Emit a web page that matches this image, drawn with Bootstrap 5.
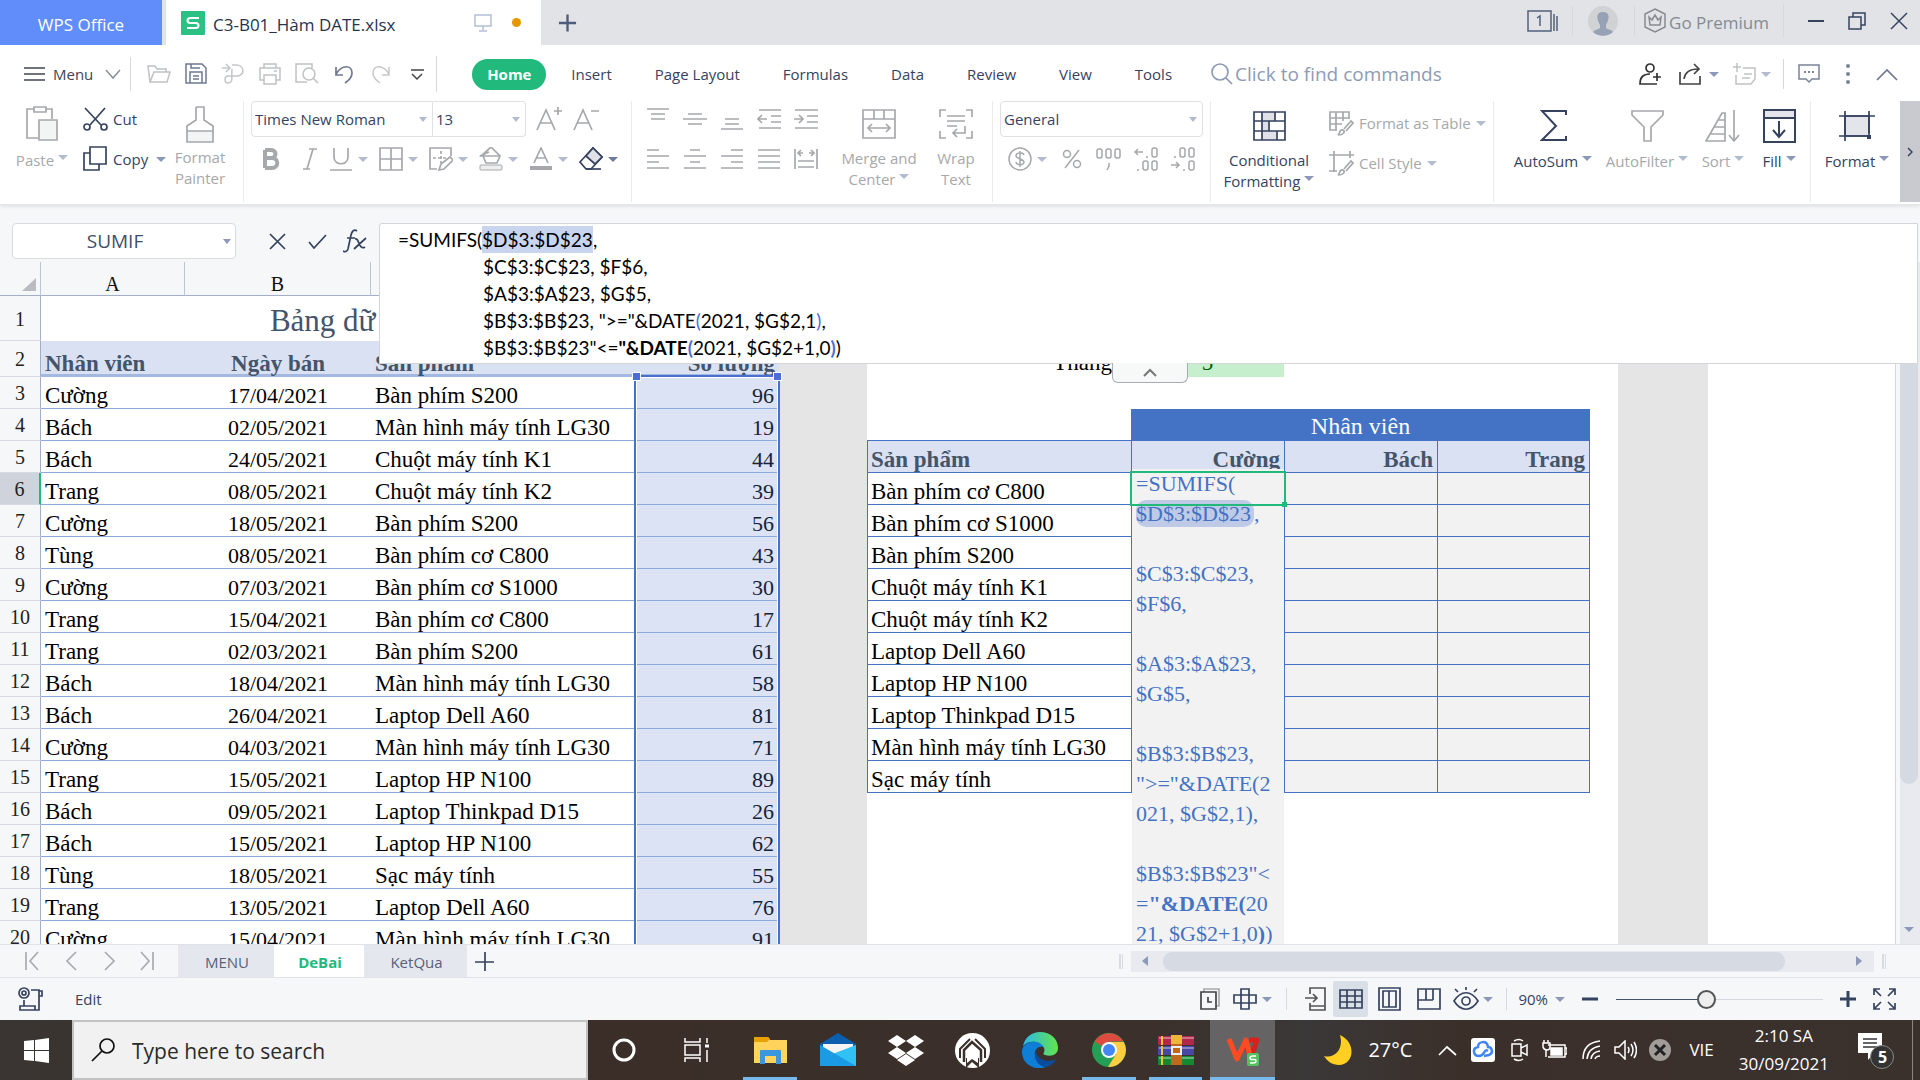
<!DOCTYPE html>
<html lang="vi">
<head>
<meta charset="utf-8">
<meta name="viewport" content="width=device-width, initial-scale=1">
<title>C3-B01_Hàm DATE.xlsx - WPS Office</title>
<link href="https://cdn.jsdelivr.net/npm/bootstrap@5.3.0/dist/css/bootstrap.min.css" rel="stylesheet">
<style>
:root{--ink:#36435f;--dim:#a6a8ac;--soft:#f5f7f9;--green:#21b97c;--blue:#4472c4}
html,body{height:100%}
body{font:15px/21px "Open Sans","Noto Sans",sans-serif;color:var(--ink);background:#fff;overflow:hidden}
button{background:none;border:0;padding:0;color:inherit;display:inline-flex;align-items:center;justify-content:center;white-space:nowrap}
a{color:inherit;text-decoration:none}
svg{flex:none;display:block}
svg:not([fill]){fill:none}
svg:not([stroke]){stroke:currentColor}
svg:not([stroke-width]){stroke-width:2}
.off{color:var(--dim)}
.dd{width:0;height:0;border:5px solid transparent;border-top-color:#8b98b8;border-bottom:0;flex:none}
.off .dd{border-top-color:#b3bccf}
.vr-line{width:1px;background:#d5d8dd;flex:none}
/* title bar */
.titlebar{height:45px;background:#e1e3e7;font-size:17px}
.brand-tab{width:162px;background:#618dfb;color:#fff;margin-right:4px}
.file-tab{width:375px;background:#fff;color:#27334d;padding-left:15px}
.dot{width:9px;height:9px;border-radius:50%;background:#e59700}
/* menu */
.menubar{height:55px;padding-top:3px}
.q{width:37px;height:32px}
.home{background:var(--green);color:#fff;font-weight:700;border-radius:16px;width:74px;height:31px;margin-right:-18px}
.tabs-nav{gap:43px;margin-left:35px}
.finder{border:0;outline:0;font-size:19px;width:240px;color:#8e9bb5;background:none;padding:0 0 0 2px}
.finder::placeholder{color:#8e9bb5;opacity:1}
/* ribbon */
.ribbon{height:105px;padding-top:1px;border-bottom:1px solid #e4e6e9;box-shadow:0 2px 3px #00000014;position:relative;z-index:2}
.sep{width:1px;height:101px;background:#e9ebee;flex:none}
.trow{height:36px;display:flex;align-items:center}
.rows{display:flex;flex-direction:column;gap:4px}
.big{flex-direction:column;justify-content:flex-start;align-items:center;padding-top:5px;text-align:center}
.big .lbl{display:flex;align-items:flex-start;gap:4px}
.big .lbl .dd{margin-top:5px}
.big svg{margin-bottom:9px}
.tool{width:37px;height:32px}
.tooldd{width:50px;justify-content:flex-start;gap:5px;height:32px}
.w38{width:38px}.w40{width:40px}.w44{width:44px}.w52{width:52px}.w62{width:62px}.w74{width:74px}.w84{width:84px}.w90{width:90px}.w98{width:98px}
.pick{font-size:15px;height:36px;border:1px solid #dfe1e5;border-radius:4px;color:var(--ink);padding:1px 20px 0 3px;appearance:none;background:#fff url("data:image/svg+xml,%3Csvg xmlns='http://www.w3.org/2000/svg' width='10' height='5'%3E%3Cpath d='M1 0h8L5 5z' fill='%23b3bccf'/%3E%3C/svg%3E") no-repeat right 4px center}
.pick-font{width:182px;border-radius:4px 0 0 4px}
.pick-size{width:93px;border-left:0;border-radius:0 4px 4px 0}
.pick-num{width:203px}
.more{width:20px;background:#c8cad0;height:101px;margin-left:auto}
/* formula bar */
.fbar{height:57px;background:var(--soft);position:relative;z-index:1}
.namebox{width:224px;height:36px;margin:18px 0 0 12px;border:1px solid #d8dbe0;border-radius:4px;text-align:center;font-size:19px;color:#3f4d6b;padding-right:20px;background:#fff url("data:image/svg+xml,%3Csvg xmlns='http://www.w3.org/2000/svg' width='10' height='5'%3E%3Cpath d='M1 0h8L5 5z' fill='%238b98b8'/%3E%3C/svg%3E") no-repeat right 3px center}
.fbtns{padding:24px 0 0 33px;gap:22px}
.fedit{position:absolute;left:379px;right:2px;top:18px;height:141px;z-index:6;background:#fff;border:1px solid #d3d5da;border-radius:3px 0 0 0;padding:2px 0 0 18px;font:19px/27px Lato,sans-serif;color:#000;outline:0}
.fedit div+div{padding-left:85px}
.fedit .sel{background:#c9d4ef;padding:2px 0}
.paren{color:#4a6fd0}
.collapse-tab{position:absolute;left:1112px;top:158px;width:76px;height:20px;z-index:6;background:#f7f8f8;border:1px solid #a9acb1;border-top:0;border-radius:0 0 6px 6px}
/* sheet */
.sheet{position:relative;overflow:hidden;min-height:0;border-right:1px solid #d5d8dd;background:#fff}
.grid{table-layout:fixed;width:100%;border-collapse:separate;border-spacing:0;font-family:"Liberation Serif",serif;color:#000}
.grid td,.grid th{padding:0 4px;white-space:nowrap;vertical-align:bottom;font-size:23px;line-height:24px;height:32px;font-weight:400}
.grid thead th{height:34px;background:var(--soft);border-bottom:1px solid #a3afc6;border-right:1px solid #bcc5d6;font-size:20px;line-height:22px;text-align:center;color:#111;vertical-align:bottom}
.grid tbody th{background:var(--soft);border-right:1px solid #a3afc6;border-bottom:1px solid #d5dae4;text-align:center;font-size:20px;line-height:30px;vertical-align:middle;color:#222;padding-top:1px}
.grid .now th{background:#cfd3db;border-right:2px solid var(--green)}
.grid .r1 td,.grid .r1 th{height:45px}
.grid .r1 .ttl{font-size:31px;line-height:36px;text-align:center;color:#44546a;padding-bottom:2px}
.grid .r2 td,.grid .r2 th{height:36px}
.grid .r2 td{padding-bottom:2px}
.grid .r2 .hd{background:#d9e1f2;color:#44546a;font-weight:700;border-bottom:3px solid #a2b8e1;line-height:20px;padding-bottom:0}
.grid .ln{border-bottom:1px solid #8ea9db}
.grid .dt{text-align:center;font-size:22px}
.grid .num{text-align:right;font-size:22px;background:#dce3f5;padding-right:5px;position:relative;color:#152238}
.grid .e{text-align:right}
.grid .gray{background:#e5e5e5}
.grid .inp{background:#c6efce;color:#006100;text-align:center}
.grid .lab{text-align:right;padding-right:19px}
.grid .f{border-left:1px solid var(--blue);border-bottom:1px solid var(--blue);padding-left:3px}
.grid .v{border-left:1px solid var(--blue);border-bottom:1px solid var(--blue);background:#f2f2f2}
.grid .vr-end{border-right:1px solid var(--blue)}
.grid .top{border-bottom:1px solid var(--blue)}
.grid .band{background:var(--blue);color:#fff;text-align:center;font-size:24px;line-height:30px}
.grid .sub{background:#d9e1f2;color:#44546a;font-weight:700}
.grid td.act{position:relative;overflow:visible}
.celled{position:absolute;left:0;top:-4px;width:152px;height:500px;background:#f2f2f2;color:var(--blue);font-size:22px;line-height:30px;padding-left:4px;text-align:left;z-index:2;outline:0}
.celled .pill{background:#bfcae7;border-radius:10px;padding:1px 3px 1px 0}
.frame{position:absolute;left:-2px;top:-2px;width:156px;height:35px;border:2px solid var(--green);z-index:3}
.frame::after{content:"";position:absolute;right:-3px;bottom:-3px;width:5px;height:5px;background:var(--green)}
.range{position:absolute;left:-1px;right:-1px;top:-2px;height:640px;border:2px solid #4a6fd0;z-index:2;box-shadow:inset 0 0 0 1px #fff}
.range::before,.range::after{content:"";position:absolute;top:-4px;width:7px;height:7px;background:#4a6fd0;outline:1px solid #fff}
.range::before{left:-3px}.range::after{right:-3px}
.vscroll{width:20px;margin-left:4px;background:#e8eaf0;position:relative;flex:none}
.vthumb{background:#d5d9e2;border-radius:9px;width:18px;height:522px}
.vdown{position:absolute;left:4px;bottom:12px}
/* sheet tabs and status */
.sheetbar{height:34px;background:var(--soft);border-top:1px solid #dfe2e7;border-bottom:1px solid #dfe2e7}
.snav{padding-left:25px;gap:23px;color:#a9abb0;width:178px}
.stab{height:32px;background:#e5e7ee;color:#56617d;padding:3px 0 0 2px}
.stab.cur{background:#fff;color:var(--green);font-weight:700}
.hs{height:21px;width:743px;background:#e8eaf0}
.hthumb{height:19px;width:622px;border-radius:9px;background:#d6dae3}
.statusbar{height:42px;background:var(--soft)}
.zoom{appearance:none;width:207px;height:20px;background:linear-gradient(90deg,#44526f 0 90px,#d5d8de 90px) center/100% 1px no-repeat;margin:0}
.zoom::-webkit-slider-thumb{appearance:none;width:19px;height:19px;border-radius:50%;background:#eee;border:2px solid #555}
/* taskbar */
.taskbar{height:60px;background:linear-gradient(90deg,#3a3532,#3b2e29 25%,#3b302b 60%,#3a3838 68%,#3b2f2a 76%,#3a312d);color:#fff}
.tsearch{width:516px;height:60px;background:#f1f1f1;border:2px solid #c2c2c2;color:#222;padding-left:17px}
.tsearch input{border:0;background:none;outline:0;font-size:21px;color:#2b2b2b;width:400px;padding:2px 0 0 17px}
.tsearch input::placeholder{color:#2b2b2b;opacity:1}
.app{height:60px;position:relative}
.app.run::after{content:"";position:absolute;left:0;right:0;bottom:0;height:3px;background:#76b9ed}
.app.front{background:#656363}
.tray{font-size:17px;line-height:28px}
.degrees{font-size:20px}
</style>
<script src="https://cdn.jsdelivr.net/npm/bootstrap@5.3.0/dist/js/bootstrap.bundle.min.js"></script>
</head>
<body class="d-flex flex-column vh-100">

<header class="titlebar d-flex align-items-stretch flex-shrink-0">
  <button class="brand-tab pt-1">WPS Office</button>
  <div class="file-tab d-flex align-items-center">
    <svg width="24" height="24" viewBox="0 0 24 24" stroke="none"><rect width="24" height="24" rx="1" fill="#2cc184"/><path d="M18 7H9.500Q6.500 7 6.500 9.500T9.500 12h5q3 0 3 2.500T14.500 17H6" stroke="#fff" stroke-width="2"/></svg>
    <span class="ms-2 pt-1">C3-B01_Hàm DATE.xlsx</span>
    <svg class="ms-auto" width="18" height="18" viewBox="0 0 18 18" stroke="#b4bfd6" stroke-width="1.500"><path d="M1 1h16v11H1zM9 12v4M5 17h8"/></svg>
    <span class="dot" style="margin:0 20px"></span>
  </div>
  <button style="margin-left:17px" aria-label="New tab"><svg width="19" height="18" viewBox="0 0 20 18" stroke="#4f5d7c" stroke-width="2.500"><path d="M1 9h18M10 0v18"/></svg></button>
  <div class="d-flex align-items-center ms-auto pb-1">
    <button aria-label="Windows"><svg width="32" height="22" viewBox="0 0 32 22" stroke="#53617f" stroke-width="1.500"><path d="M1 1h23v20H1zM27 4v17M30 6v15M10 8l3-2v10"/></svg></button>
    <span class="vr-line" style="height:30px;margin:0 15px 0 13px"></span>
    <svg width="30" height="30" viewBox="0 0 30 30" stroke="none"><circle cx="15" cy="15" r="15" fill="#d1d2d3"/><path d="M15 6c8 0 6 8 3 13v3c3 2 6 2 7 4a15 15 0 0 1-20 0c1-2 4-2 7-4v-3C9 14 7 6 15 6z" fill="#96a2b5"/></svg>
    <span class="vr-line ms-3" style="height:30px"></span>
    <button style="color:#868a91;margin-left:9px"><svg width="22" height="25" viewBox="0 0 22 25" stroke-width="1.500"><path d="M11 1l10 5v13l-10 5-10-5V6zM6 17L5 9l3 3 3-5 3 5 3-3-1 8z"/></svg><span class="pt-1" style="margin-left:3px">Go Premium</span></button>
    <span class="vr-line" style="height:33px;margin-left:14px"></span>
    <button class="ms-4" aria-label="Minimize"><svg width="16" height="18" viewBox="0 0 16 18"><path d="M0 9h16"/></svg></button>
    <button class="ms-4" aria-label="Restore"><svg width="18" height="18" viewBox="0 0 18 18" stroke-width="1.500"><path d="M1 5h12v12H1zM5 5V1h12v12h-4"/></svg></button>
    <button class="ms-4 me-2 pe-1" aria-label="Close"><svg width="18" height="18" viewBox="0 0 18 18" stroke-width="1.500"><path d="M1 1l16 16M17 1L1 17"/></svg></button>
  </div>
</header>

<nav class="menubar d-flex align-items-center flex-shrink-0">
  <button class="ms-4" style="color:#3f4654"><svg width="21" height="16" viewBox="0 0 21 16" stroke-width="1.500"><path d="M0 2h21M0 8h21M0 14h21"/></svg><span class="ms-2">Menu</span><svg style="margin-left:9px" width="20" height="12" viewBox="0 0 20 12" stroke="#8b909b" stroke-width="1.500"><path d="M4 2l7 8 7-8"/></svg></button>
  <span class="vr-line ms-2" style="height:34px"></span>
  <div class="d-flex off" style="margin-left:9px">
    <button class="q" aria-label="Open"><svg width="24" height="20" viewBox="0 0 24 20" stroke-width="1.500" stroke="#bfc1c4"><path d="M3 18L1 2h7l2 3h9v3M3 18L7 8h16l-3 10z"/></svg></button>
    <button class="q" aria-label="Save"><svg width="22" height="22" viewBox="0 0 22 22" stroke-width="1.500" stroke="#6f7890"><path d="M1 1h16l4 4v15H1zM5 20V9h12v11M6 1v4h9M8 13h6M8 16h6"/></svg></button>
    <button class="q" aria-label="Export"><svg width="22" height="22" viewBox="0 0 22 22" stroke-width="1.500" stroke="#c3c5c8"><path d="M0 5h7M4 1l4 4-4 4M10 2h4c9 0 9 11 1 11H6c-4 0-4 7 0 7 6 0 3-6 4-14"/></svg></button>
    <button class="q" aria-label="Print"><svg width="22" height="22" viewBox="0 0 22 22" stroke-width="1.500" stroke="#bfc1c4"><path d="M5 5V1h12v4M5 17H1V5h20v12h-4M5 12h12v9H5zM15 8h3"/></svg></button>
    <button class="q" aria-label="Preview"><svg width="24" height="22" viewBox="0 0 24 22" stroke-width="1.500" stroke="#bfc1c4"><path d="M12 19H1V1h16v4"/><circle cx="14" cy="11" r="6"/><path d="M18 15l5 5"/></svg></button>
    <button class="q" aria-label="Undo"><svg width="20" height="20" viewBox="0 0 20 20" stroke-width="1.700" stroke="#6f7890"><path d="M2 3v8h7M2 10C8 0 18 1 18 9c0 5-4 8-7 10"/></svg></button>
    <button class="q" aria-label="Redo"><svg width="20" height="20" viewBox="0 0 20 20" stroke-width="1.500" stroke="#c6c8cb"><path d="M18 3v8h-7M18 10C12 0 2 1 2 9c0 5 4 8 7 10"/></svg></button>
    <button class="q" aria-label="Customize"><svg width="13" height="13" viewBox="0 0 13 13" stroke="#444" stroke-width="1.500"><path d="M0 2h13M1 6l5 5 5-5"/></svg></button>
  </div>
  <span class="vr-line" style="height:36px"></span>
  <div class="tabs-nav d-flex align-items-center">
    <a href="#" class="home d-flex align-items-center justify-content-center">Home</a>
    <a href="#">Insert</a><a href="#">Page Layout</a><a href="#">Formulas</a><a href="#">Data</a><a href="#">Review</a><a href="#">View</a><a href="#">Tools</a>
    <label class="d-flex align-items-center" style="margin-left:-4px"><svg width="22" height="22" viewBox="0 0 22 22" stroke="#8e9bb5" stroke-width="1.700"><circle cx="9" cy="9" r="8"/><path d="M15 15l6 6"/></svg><input class="finder" placeholder="Click to find commands" aria-label="Find commands"></label>
  </div>
  <div class="d-flex align-items-center ms-auto" style="padding-right:22px">
    <button aria-label="Account"><svg width="22" height="22" viewBox="0 0 22 22" stroke="#333" stroke-width="1.700"><circle cx="11" cy="5" r="4"/><path d="M13 21H1c0-7 3-10 10-10M18 10v8M14 14h8M13 21h5"/></svg></button>
    <button style="margin-left:18px" aria-label="Share"><svg width="25" height="22" viewBox="0 0 25 22" stroke="#444" stroke-width="1.700"><path d="M1 9v12h20v-8M5 16C6 9 11 6 19 6M15 1l5 5-5 5"/></svg><i class="dd" style="margin-left:5px"></i></button>
    <button class="off" style="margin-left:14px" aria-label="Notes"><svg width="23" height="22" viewBox="0 0 23 22" stroke="#c0c2c5" stroke-width="1.500"><path d="M4 0v9M0 4h8M10 5h12v11l-4 5H3v-9M11 11h8M9 15h8"/></svg><i class="dd" style="margin-left:5px"></i></button>
    <span class="vr-line" style="height:30px;margin:0 14px 0 12px"></span>
    <button aria-label="Comments"><svg width="22" height="20" viewBox="0 0 22 20" stroke="#7a8499" stroke-width="1.500"><path d="M1 1h20v14h-7l-3 3-3-3H1z"/><path d="M6 8h2M10 8h2M14 8h2" stroke-width="2"/></svg></button>
    <button class="ms-4" aria-label="More"><svg width="8" height="22" viewBox="0 0 8 22" stroke="none" fill="#7a8499"><circle cx="4" cy="3" r="2"/><circle cx="4" cy="11" r="2"/><circle cx="4" cy="19" r="2"/></svg></button>
    <button class="ms-4" aria-label="Collapse ribbon"><svg width="22" height="13" viewBox="0 0 22 13" stroke="#6f7890" stroke-width="1.700"><path d="M1 12L11 2l10 10"/></svg></button>
  </div>
</nav>

<section class="ribbon d-flex align-items-start flex-shrink-0">
  <button class="big off w62" style="margin-left:11px"><svg width="32" height="35" viewBox="0 0 32 35" stroke-width="1.700"><path d="M8 3H1v29h11M20 3h6v10M8 1h12v5H8z"/><path d="M13 14h18v20H13z" fill="#f3f5f5"/></svg><span class="lbl">Paste <i class="dd"></i></span></button>
  <div class="rows" style="width:86px;margin-left:10px">
    <div class="trow"><button><svg width="25" height="24" viewBox="0 0 25 24" stroke-width="1.700"><path d="M2 1l16 17M22 1L7 18"/><circle cx="4" cy="20" r="3"/><circle cx="21" cy="20" r="3"/></svg><span style="margin-left:5px">Cut</span></button></div>
    <div class="trow"><button><svg width="24" height="26" viewBox="0 0 24 26" stroke-width="1.700"><path d="M7 7H1v17h15v-6M7 1h16v17H7z"/></svg><span style="margin-left:6px">Copy</span><i class="dd ms-2"></i></button></div>
  </div>
  <button class="big off w62 ms-0"><svg class="mb-1" width="28" height="37" viewBox="0 0 28 37" stroke-width="1.700"><path d="M1 25h26v11H1z" fill="#f3f5f5"/><path d="M10 1h8v13l9 6v5M10 1v13l-9 6v5"/></svg><span>Format<br>Painter</span></button>
  <span class="sep" style="margin:0 7px 0 12px"></span>
  <div class="rows off">
    <div class="trow">
      <select class="pick pick-font" aria-label="Font"><option>Times New Roman</option></select><select class="pick pick-size" aria-label="Size"><option>13</option></select>
      <button class="tool ms-1" aria-label="Grow font"><svg width="26" height="24" viewBox="0 0 26 24" stroke-width="1.700"><path d="M1 23L10 3l9 20M4 16h12M18 4h8M22 0v8"/></svg></button>
      <button class="tool" aria-label="Shrink font"><svg width="26" height="24" viewBox="0 0 26 24" stroke-width="1.700"><path d="M1 23L10 3l9 20M4 16h12M18 4h8"/></svg></button>
    </div>
    <div class="trow">
      <button class="w40 h-100" aria-label="Bold"><svg width="18" height="22" viewBox="0 0 18 22" stroke-width="4"><path d="M3 2v18M3 2h6c6 0 6 8 0 8H3M3 10h7c7 0 7 10 0 10H3"/></svg></button>
      <button class="w38 h-100" aria-label="Italic"><svg width="14" height="22" viewBox="0 0 14 22" stroke-width="1.700"><path d="M6 1h8M0 21h7M10 1L4 21"/></svg></button>
      <button class="tooldd" aria-label="Underline"><svg width="24" height="24" viewBox="0 0 24 24" stroke-width="1.700"><path d="M5 1v9c0 9 14 9 14 0V1M1 23h22"/></svg><i class="dd"></i></button>
      <button class="tooldd" aria-label="Borders"><svg width="24" height="24" viewBox="0 0 24 24" stroke-width="1.700"><path d="M1 1h22v22H1zM12 1v22M1 12h22"/></svg><i class="dd"></i></button>
      <button class="tooldd" aria-label="Draw border"><svg width="24" height="24" viewBox="0 0 24 24" stroke-width="1.700"><path d="M8 22H1V1h21v8"/><path d="M4 11h13M12 4v12" stroke-dasharray="3 2"/><path d="M10 23l2-6 9-7 3 3-9 9z"/></svg><i class="dd"></i></button>
      <button class="tooldd" aria-label="Fill color"><svg width="24" height="24" viewBox="0 0 24 24" stroke-width="1.700"><path d="M12 0L2 9h18M12 0l9 9-3 7H7l-3-7M1 9l9-4"/><rect x="1" y="18" width="22" height="5" rx="1" fill="#eee" stroke-width="1"/></svg><i class="dd"></i></button>
      <button class="tooldd" aria-label="Font color"><svg width="24" height="24" viewBox="0 0 24 24" stroke-width="1.700"><path d="M5 16l7-15 7 15M8 11h8"/><path d="M1 21h22" stroke-width="4"/></svg><i class="dd"></i></button>
      <button class="tooldd" aria-label="Clear" style="color:var(--ink)"><svg width="24" height="24" viewBox="0 0 24 24" stroke-width="1.700"><path d="M1 15L14 1l9 9-11 12H7z"/><path d="M7 9l9 8 7-7-9-9z" fill="#dfe1e7"/><path d="M7 22h15"/></svg><i class="dd" style="border-top-color:#6d7a9c"></i></button>
    </div>
  </div>
  <span class="sep" style="margin:0 7px 0 2px"></span>
  <div class="rows off">
    <div class="trow">
      <button class="tool" aria-label="Top align"><svg width="22" height="24" viewBox="0 0 22 24" stroke-width="1.700"><path d="M0 2h22M4 7h14M4 12h14"/></svg></button>
      <button class="tool" aria-label="Middle align"><svg width="24" height="24" viewBox="0 0 24 24" stroke-width="1.700"><path d="M5 7h14M0 12h24M5 17h14"/></svg></button>
      <button class="tool" aria-label="Bottom align"><svg width="22" height="24" viewBox="0 0 22 24" stroke-width="1.700"><path d="M4 12h14M4 17h14M0 22h22"/></svg></button>
      <button class="tool" aria-label="Decrease indent"><svg width="24" height="22" viewBox="0 0 24 22" stroke-width="1.700"><path d="M2 2h22M14 8h10M14 14h10M2 20h22M10 11H1M5 7l-4 4 4 4"/></svg></button>
      <button class="tool" aria-label="Increase indent"><svg width="24" height="22" viewBox="0 0 24 22" stroke-width="1.700"><path d="M1 2h23M13 8h11M13 14h11M1 20h23M0 11h9M5 7l4 4-4 4"/></svg></button>
    </div>
    <div class="trow">
      <button class="tool" aria-label="Left"><svg width="22" height="22" viewBox="0 0 22 22" stroke-width="1.700"><path d="M0 2h12M0 8h22M0 14h12M0 20h22"/></svg></button>
      <button class="tool" aria-label="Center"><svg width="22" height="22" viewBox="0 0 22 22" stroke-width="1.700"><path d="M6 2h10M0 8h22M6 14h10M0 20h22"/></svg></button>
      <button class="tool" aria-label="Right"><svg width="22" height="22" viewBox="0 0 22 22" stroke-width="1.700"><path d="M10 2h12M0 8h22M10 14h12M0 20h22"/></svg></button>
      <button class="tool" aria-label="Justify"><svg width="22" height="22" viewBox="0 0 22 22" stroke-width="1.700"><path d="M0 2h22M0 8h22M0 14h22M0 20h22"/></svg></button>
      <button class="tool" aria-label="Distribute"><svg width="24" height="22" viewBox="0 0 24 22" stroke-width="1.700"><path d="M1 1v20M23 1v20M4 13h16M4 19h16M4 5h5M15 5h5M7 2L4 5l3 3M17 2l3 3-3 3"/></svg></button>
    </div>
  </div>
  <button class="big off w90" style="margin-left:10px;padding-top:8px"><svg width="34" height="30" viewBox="0 0 34 30" stroke-width="1.700"><path d="M1 1h32v28H1zM1 10h32M12 1v9M22 1v9M6 19h22M10 15l-4 4 4 4M24 15l4 4-4 4"/></svg><span>Merge and</span><span class="lbl">Center <i class="dd"></i></span></button>
  <button class="big off w52" style="margin-left:6px;padding-top:8px"><svg width="34" height="30" viewBox="0 0 34 30" stroke-width="1.700"><path d="M7 1H1v7M27 1h6v7M7 29H1v-7M27 29h6v-7M8 7h18M8 12h18M8 17h10M26 17v7H14M18 20l-4 4 4 4"/></svg><span>Wrap<br>Text</span></button>
  <span class="sep" style="margin:0 7px 0 10px"></span>
  <div class="rows off">
    <div class="trow"><select class="pick pick-num" aria-label="Number format"><option>General</option></select></div>
    <div class="trow">
      <button class="tooldd ms-2" aria-label="Currency" style="width:45px"><svg width="24" height="24" viewBox="0 0 24 24" stroke-width="1.500"><circle cx="12" cy="12" r="11"/><path d="M16 8c-1-3-8-3-8 1 0 3 8 3 8 6 0 4-8 3-8 0M12 4v16"/></svg><i class="dd"></i></button>
      <button class="tool" aria-label="Percent"><svg width="20" height="20" viewBox="0 0 20 20" stroke-width="1.500"><circle cx="5" cy="5" r="3.500"/><circle cx="15" cy="15" r="3.500"/><path d="M17 1L3 19"/></svg></button>
      <button class="tool" aria-label="Thousands"><svg width="26" height="24" viewBox="0 0 26 24" stroke-width="1.500"><rect x="1" y="2" width="5" height="9" rx="2"/><rect x="10" y="2" width="5" height="9" rx="2"/><rect x="19" y="2" width="5" height="9" rx="2"/><path d="M13 16v3l-2 4"/></svg></button>
      <button class="tool" aria-label="Add decimal"><svg width="24" height="24" viewBox="0 0 24 24" stroke-width="1.500"><rect x="18" y="1" width="5" height="9" rx="2"/><rect x="18" y="14" width="5" height="9" rx="2"/><rect x="9" y="14" width="5" height="9" rx="2"/><path d="M9 5H1M4 2L1 5l3 3M13 9v2M4 22v2"/></svg></button>
      <button class="tool" aria-label="Remove decimal"><svg width="24" height="24" viewBox="0 0 24 24" stroke-width="1.500"><rect x="18" y="1" width="5" height="9" rx="2"/><rect x="9" y="1" width="5" height="9" rx="2"/><rect x="18" y="14" width="5" height="9" rx="2"/><path d="M0 18h8M5 15l3 3-3 3M4 9v2M13 22v2"/></svg></button>
    </div>
  </div>
  <span class="sep" style="margin:0 9px 0 7px"></span>
  <button class="big w98" style="padding-top:10px"><svg width="33" height="30" viewBox="0 0 33 30" stroke-width="1.700"><path d="M9 1v28h14v-9H15v-9h7V1z" fill="#dfe1e7" stroke="none"/><path d="M1 1h31v28H1zM1 10h31M1 20h31M9 1v28M16 10v10M22 1v9M24 20v9"/></svg><span>Conditional</span><span class="lbl">Formatting <i class="dd"></i></span></button>
  <div class="rows off" style="width:164px;padding:4px 0 0 11px">
    <div class="trow"><button><svg width="25" height="25" viewBox="0 0 25 25" stroke-width="1.700"><path d="M8 19H1V1h19v7M1 7h19M1 13h12M7 1v18M14 1v9M9 24c2-1 1-6 5-5 3 2 0 5-5 5zM15 18l7-8 2 2-7 8"/></svg><span style="margin-left:5px">Format as Table</span><i class="dd" style="margin-left:5px"></i></button></div>
    <div class="trow"><button><svg width="25" height="25" viewBox="0 0 25 25" stroke-width="1.700"><path d="M0 4h25M5 0v21M0 20h8M21 0v7M9 24c2-1 1-6 5-5 3 2 0 5-5 5zM15 18l7-8 2 2-7 8"/></svg><span style="margin-left:5px">Cell Style</span><i class="dd" style="margin-left:5px"></i></button></div>
  </div>
  <span class="sep" style="margin:0 17px 0 11px"></span>
  <button class="big w84" style="padding-top:9px"><svg width="27" height="32" viewBox="0 0 27 32"><path d="M26 5V1H2l14 15L2 30h24v-4"/></svg><span class="lbl">AutoSum <i class="dd"></i></span></button>
  <button class="big off w84" style="padding-top:9px;margin-left:10px"><svg width="33" height="32" viewBox="0 0 33 32" stroke-width="1.700"><path d="M1 1h31v4L20 17v14h-7V17L1 5z"/></svg><span class="lbl">AutoFilter <i class="dd"></i></span></button>
  <button class="big off w52 ms-2" style="padding-top:9px"><svg width="36" height="32" viewBox="0 0 36 32" stroke-width="1.700"><path d="M1 31L17 3h3v28zM5 24h15M9 17h11M13 10h7M29 0v31M24 25l5 6 5-6"/></svg><span class="lbl">Sort <i class="dd"></i></span></button>
  <button class="big w44 ms-2" style="padding-top:8px"><svg class="mb-2" width="33" height="34" viewBox="0 0 33 34"><path d="M1 1h31v8H1z" fill="#e3e5ea"/><path d="M1 9v24h31V9M16 12v15M10 21l6 7 6-7"/></svg><span class="lbl">Fill <i class="dd"></i></span></button>
  <span class="sep" style="margin:0 9px 0 9px"></span>
  <button class="big w74" style="padding-top:9px"><svg width="36" height="32" viewBox="0 0 36 32" stroke-width="1.700"><path d="M6 6h24v20H6z" fill="#e3e5ea"/><path d="M0 6h36M6 1v30M30 1v22M0 26h28"/><path d="M30 25v4" stroke-width="4"/></svg><span class="lbl">Format <i class="dd"></i></span></button>
  <button class="more" aria-label="Scroll ribbon"><svg width="6" height="10" viewBox="0 0 6 10" stroke-width="1.500"><path d="M1 1l4 4-4 4"/></svg></button>
</section>

<section class="fbar d-flex align-items-start flex-shrink-0">
  <input class="namebox" value="SUMIF" aria-label="Name box">
  <div class="fbtns d-flex align-items-center">
    <button aria-label="Cancel"><svg width="17" height="17" viewBox="0 0 17 17" stroke-width="1.700"><path d="M1 1l15 15M16 1L1 16"/></svg></button>
    <button aria-label="Accept"><svg width="19" height="15" viewBox="0 0 19 15" stroke-width="1.700"><path d="M1 8l5 6L18 1"/></svg></button>
    <button aria-label="Insert function" style="margin-left:-6px"><svg width="24" height="24" viewBox="0 0 24 24" stroke-width="1.700"><path d="M14 2c-3-2-5 0-6 4L5 20c-1 3-3 3-5 2M4 9h8M12 10c4-2 4 12 10 8M23 9L11 20"/></svg></button>
  </div>
  <div class="fedit" contenteditable="true" spellcheck="false" role="textbox" aria-label="Formula"><div>=SUMIFS(<span class="sel">$D$3:$D$23</span>,</div><div>$C$3:$C$23, $F$6,</div><div>$A$3:$A$23, $G$5,</div><div>$B$3:$B$23, "&gt;="&amp;DATE<span class="paren">(</span>2021, $G$2,1<span class="paren">)</span>,</div><div>$B$3:$B$23"&lt;=<b>"&amp;DATE<span class="paren">(</span></b>2021, $G$2+1,0<b class="paren">)</b>)</div></div>
  <button class="collapse-tab" aria-label="Collapse formula bar"><svg width="14" height="9" viewBox="0 0 14 9" stroke="#777"><path d="M1 8l6-6 6 6"/></svg></button>
</section>

<main class="d-flex flex-grow-1" style="min-height:0;background:var(--soft)">
  <div class="sheet flex-grow-1">
    <table class="grid">
      <colgroup><col style="width:41px"><col style="width:144px"><col style="width:186px"><col style="width:264px"><col style="width:144px"><col style="width:88px"><col style="width:264px"><col style="width:153px"><col style="width:153px"><col style="width:153px"><col style="width:28px"><col style="width:90px"><col></colgroup>
      <thead><tr><th class="p-0"><svg class="ms-auto me-1 mb-1" width="14" height="13" viewBox="0 0 14 13" stroke="none" fill="#b9bcc0"><path d="M14 0v13H0z"/></svg></th><th>A</th><th>B</th><th>C</th><th>D</th><th>E</th><th>F</th><th>G</th><th>H</th><th>I</th><th></th><th></th><th></th></tr></thead>
      <tbody id="cells"></tbody>
    </table>
  </div>
  <div class="vscroll"><div class="vthumb"></div><i class="dd vdown"></i></div>
</main>

<section class="sheetbar d-flex align-items-center flex-shrink-0">
  <div class="snav d-flex">
    <button aria-label="First"><svg width="15" height="20" viewBox="0 0 15 20" stroke-width="1.700"><path d="M1 1v18M13 1L5 10l8 9"/></svg></button>
    <button aria-label="Previous"><svg width="15" height="20" viewBox="0 0 15 20" stroke-width="1.700"><path d="M13 1L4 10l9 9"/></svg></button>
    <button aria-label="Next"><svg width="15" height="20" viewBox="0 0 15 20" stroke-width="1.700"><path d="M4 1l9 9-9 9"/></svg></button>
    <button aria-label="Last"><svg width="15" height="20" viewBox="0 0 15 20" stroke-width="1.700"><path d="M2 1l8 9-8 9M14 1v18"/></svg></button>
  </div>
  <button class="stab" style="width:96px">MENU</button><button class="stab cur" style="width:90px">DeBai</button><button class="stab" style="width:103px">KetQua</button>
  <button class="ms-2" aria-label="Add sheet"><svg width="19" height="19" viewBox="0 0 19 19" stroke-width="1.700"><path d="M0 10h19M10 0v19"/></svg></button>
  <svg class="ms-auto me-2" width="4" height="15" viewBox="0 0 4 15" stroke="#b9c0ce" stroke-width="1"><path d="M1 0v15M4 0v15"/></svg>
  <div class="hs d-flex align-items-center">
    <svg style="margin:0 14px 0 10px" width="8" height="10" viewBox="0 0 8 10" stroke="none" fill="#8b98b8"><path d="M7 0v10L1 5z"/></svg>
    <div class="hthumb"></div>
    <svg class="ms-auto" style="margin-right:11px" width="8" height="10" viewBox="0 0 8 10" stroke="none" fill="#8b98b8"><path d="M1 0v10l6-5z"/></svg>
  </div>
  <svg style="margin:0 34px 0 8px" width="4" height="15" viewBox="0 0 4 15" stroke="#b9c0ce" stroke-width="1"><path d="M1 0v15M4 0v15"/></svg>
</section>

<footer class="statusbar d-flex align-items-center flex-shrink-0">
  <svg style="margin-left:18px" width="25" height="25" viewBox="0 0 25 25" stroke-width="1.700"><circle cx="6" cy="6" r="5"/><circle cx="6" cy="6" r="2"/><path d="M13 3h8v20h-4M21 4h3v5h-3M6 13v6M2 19h15v4H2z"/></svg>
  <span style="margin-left:32px">Edit</span>
  <div class="d-flex align-items-center ms-auto" style="padding-right:24px">
    <button aria-label="History"><svg width="20" height="22" viewBox="0 0 20 22" stroke="#444" stroke-width="1.700"><path d="M4 4V1h15v17h-3" stroke="#aaa"/><path d="M1 4h15v17H1zM8 9v5h4"/></svg></button>
    <button style="margin-left:13px" aria-label="Navigate"><svg width="24" height="22" viewBox="0 0 24 22" stroke-width="1.700"><path d="M8 1h8v20H8zM1 7h22v8H1z"/></svg><i class="dd" style="margin-left:5px"></i></button>
    <span class="vr-line" style="height:22px;margin:0 18px 0 14px"></span>
    <button aria-label="Phone"><svg width="21" height="24" viewBox="0 0 21 24" stroke="#555" stroke-width="1.700"><path d="M5 7V1h15v22H5v-7M5 19h15M0 11h11M8 7l4 4-4 4"/></svg></button>
    <button aria-label="Normal view" style="width:35px;height:36px;margin-left:7px;background:#d9dfe6;border-radius:3px"><svg width="24" height="20" viewBox="0 0 24 20" stroke-width="1.700"><path d="M1 1h22v18H1zM1 7h22M1 13h22M8 1v18M16 1v18"/></svg></button>
    <button style="margin-left:10px" aria-label="Page layout"><svg width="23" height="24" viewBox="0 0 23 24" stroke-width="1.700"><path d="M1 1h21v22H1zM5 4h13v16H5zM11 4v16"/></svg></button>
    <button style="margin-left:16px" aria-label="Page break"><svg width="24" height="22" viewBox="0 0 24 22" stroke-width="1.700"><path d="M1 1h22v20H1zM1 12h15M9 1v11M16 1v11"/></svg></button>
    <button style="margin-left:12px" aria-label="Eye care"><svg width="26" height="24" viewBox="0 0 26 24" stroke-width="1.700"><path d="M1 14c7-11 17-11 24 0-7 11-17 11-24 0zM13 0v3M2 2l3 3M24 2l-3 3"/><circle cx="13" cy="14" r="4"/></svg><i class="dd" style="margin-left:4px"></i></button>
    <span class="vr-line" style="height:22px;margin:0 11px 0 13px"></span>
    <button>90%<i class="dd" style="margin-left:7px"></i></button>
    <button style="margin-left:17px" aria-label="Zoom out"><svg width="16" height="16" viewBox="0 0 16 16" stroke-width="3"><path d="M0 8h16"/></svg></button>
    <input class="zoom" style="margin-left:18px" type="range" min="0" max="100" value="43" aria-label="Zoom">
    <button style="margin-left:17px" aria-label="Zoom in"><svg width="16" height="16" viewBox="0 0 16 16" stroke-width="3"><path d="M0 8h16M8 0v16"/></svg></button>
    <button style="margin-left:17px" aria-label="Full screen"><svg width="23" height="22" viewBox="0 0 23 22" stroke-width="1.700"><path d="M1 7V1h6M1 1l7 7M16 1h6v6M22 1l-7 7M1 15v6h6M1 21l7-7M16 21h6v-6M22 21l-7-7"/></svg></button>
  </div>
</footer>

<footer class="taskbar d-flex align-items-center flex-shrink-0">
  <button aria-label="Start" style="width:72px"><svg width="25" height="25" viewBox="0 0 25 25" stroke="none" fill="#fff"><path d="M0 3l10-1v10H0zM11 2l14-2v12H11zM0 13h10v10L0 22zM11 13h14v12l-14-2z"/></svg></button>
  <label class="tsearch d-flex align-items-center"><svg width="24" height="24" viewBox="0 0 24 24" stroke="#111" stroke-width="1.700"><circle cx="16" cy="8" r="7"/><path d="M11 13L1 23"/></svg><input placeholder="Type here to search" aria-label="Search"></label>
  <button class="app" aria-label="Cortana" style="width:72px"><svg width="26" height="26" viewBox="0 0 26 26" stroke="#fff" stroke-width="3"><circle cx="13" cy="13" r="10"/></svg></button>
  <button class="app" aria-label="Task view" style="width:72px"><svg width="25" height="24" viewBox="0 0 25 24" stroke="#fff" stroke-width="1.500"><path d="M1 0v4h15V0M1 7h15v10H1zM1 24v-4h15v4M23 0v5M23 12v12"/><path d="M21 8h4" stroke-width="3"/></svg></button>
  <button class="app run" aria-label="Explorer" style="width:54px;margin-left:11px"><svg width="33" height="27" viewBox="0 0 33 27" stroke="none"><path d="M0 0h14l2 3h17v23H0z" fill="#ffd35c"/><path d="M0 0h14l2 2-3 3H0z" fill="#e8a100"/><path d="M6 14q0-1 1-1h19q1 0 1 1v13h-5v-8H11v8H6z" fill="#3a96dd"/></svg></button>
  <button class="app" aria-label="Mail" style="width:82px"><svg width="36" height="34" viewBox="0 0 36 34" stroke="none"><path d="M0 11L18 0l18 11v5H0z" fill="#0a5fae"/><path d="M3 11h30v8L18 28 3 19z" fill="#f4f4f4"/><path d="M36 12v21H18L10 22z" fill="#30c2f5"/><path d="M0 12v21h36z" fill="#1b9be4"/></svg></button>
  <button class="app" aria-label="Dropbox" style="width:54px"><svg width="36" height="31" viewBox="0 0 36 31" stroke="none" fill="#fff"><path d="M9 0l9 6-9 6-9-6zM27 0l9 6-9 6-9-6zM9 12l9 6-9 6-9-6zM27 12l9 6-9 6-9-6zM18 19l9 6-9 6-9-6z"/></svg></button>
  <button class="app" aria-label="App" style="width:78px"><svg width="35" height="35" viewBox="0 0 35 35" stroke="none"><circle cx="17.500" cy="17.500" r="17.500" fill="#fff"/><path d="M5 25V16L15 6M30 25V16L20 6" stroke="#3b302b" stroke-width="2"/><path d="M9 29V17l8-8 9 8v12" stroke="#3b302b" stroke-width="2.500"/><path d="M11 35V25h13v10l-7-6z" fill="#3b302b"/><path d="M12 17l5-5 6 5v13l-6-4-5 4z" fill="#fff"/></svg></button>
  <button class="app" aria-label="Edge" style="width:58px"><svg width="36" height="36" viewBox="0 0 36 36" stroke="none"><defs><linearGradient id="eg"><stop offset="0" stop-color="#2bb8ea"/><stop offset="1" stop-color="#62e54a"/></linearGradient></defs><path d="M1 14C3 5 10 0 18 0c11 0 18 7 18 16 0 7-7 9-13 7-4-1 1-3-1-7C18 8 6 8 1 14z" fill="url(#eg)"/><path d="M0 20C0 8 18 7 21 15c-6-1-9 4-8 9 1 6 6 10 11 11C12 39 0 32 0 20z" fill="#0f7ed6"/><path d="M14 19c-4 9 5 17 11 16 5-2 8-5 9-8-7 4-18 2-20-8z" fill="#0a4d9c"/></svg></button>
  <button class="app run" aria-label="Chrome" style="width:54px;margin:0 13px"><svg width="34" height="34" viewBox="0 0 34 34" stroke="none"><circle cx="17" cy="17" r="17" fill="#23a055"/><path d="M17 17L2.500 8.500A17 17 0 0 1 31.500 8.500H17z" fill="#dd4b3e"/><path d="M17 9h14.800A17 17 0 0 1 16 34l8-13z" fill="#ffcd41"/><circle cx="17" cy="17" r="8" fill="#fff"/><circle cx="17" cy="17" r="6" fill="#4386f5"/></svg></button>
  <button class="app run" aria-label="WinRAR" style="width:53px"><svg width="36" height="30" viewBox="0 0 36 30" stroke="none"><path d="M0 1h36v9H0z" fill="#b3284a"/><path d="M0 11h36v9H0z" fill="#4947a5"/><path d="M0 21h36v9H0z" fill="#138a32"/><path d="M1 3h36M1 13h36M1 23h36" stroke="#fff" stroke-opacity=".35"/><path d="M4 1v9M4 11v9M4 21v9" stroke="#ecc437"/><path d="M13 0h11v30H13z" fill="#c2681d"/><path d="M13 0h11v9H13z" fill="#edb83a"/><path d="M14 12h9v7h-9z" stroke="#eee" stroke-width="2"/></svg></button>
  <button class="app run front ms-2" aria-label="WPS" style="width:65px"><svg class="mt-1" width="34" height="30" viewBox="0 0 34 30" stroke="none"><path d="M23 3h8l-6 17-5-10" stroke="#d9201c" stroke-width="5" stroke-linejoin="round"/><path d="M3 2l8 20L20 3l4 16" stroke="#ff4a22" stroke-width="5" stroke-linejoin="round"/><rect x="21" y="16" width="12" height="13" rx="2" fill="#56c25f"/><path d="M30 19h-3q-3 0-3 2t3 1.500 3 1.500-3 2h-3" stroke="#fff" stroke-width="1.500"/></svg></button>
  <div class="tray d-flex align-items-center ms-auto">
    <svg width="30" height="30" viewBox="0 0 30 30" stroke="none" fill="#ffcf21"><path d="M16 0c16 7 15 29-1 30-7 0-12-4-15-9 11 3 20-7 16-21z"/></svg>
    <span class="degrees" style="margin-left:14px">27°C</span>
    <svg style="margin-left:26px" width="19" height="11" viewBox="0 0 19 11" stroke-width="1.700"><path d="M1 10l8-8 9 8"/></svg>
    <svg style="margin-left:14px" width="24" height="24" viewBox="0 0 24 24" stroke="none"><rect width="24" height="24" rx="3" fill="#fff"/><path d="M13 18l5-1c5-2 3-8-1-8C16 2 7 3 7 9c-6 1-5 9 1 9 6 0 5-8 9-5" stroke="#3f86f5" stroke-width="2.500"/></svg>
    <svg style="margin-left:16px" width="17" height="24" viewBox="0 0 17 24" stroke-width="1.500"><path d="M1 6h9v12H1zM10 10l6-3v10l-6-3M3 3q5-3 9 0M3 21q5 3 9 0"/></svg>
    <svg style="margin-left:14px" width="25" height="20" viewBox="0 0 25 20" stroke-width="1.500"><path d="M6 5h17v12H6M23 8h2v6h-2M1 3h7v4q0 3-3 3t-4-3zM2 0v3M6 0v3M4 10v7"/><path d="M9 8h11v7H9z" fill="#fff"/></svg>
    <svg style="margin-left:15px" width="19" height="20" viewBox="0 0 19 20" stroke-width="1.500"><path d="M1 19Q1 3 18 1M5 19Q6 8 18 6M9 19q1-7 9-8M13 19q1-3 5-3"/></svg>
    <svg style="margin-left:13px" width="23" height="20" viewBox="0 0 23 20" stroke-width="1.500"><path d="M1 7h4l6-6v18l-6-6H1zM14 7q2 3 0 6M17 4q4 6 0 12M20 2q5 8 0 16"/></svg>
    <svg style="margin-left:11px" width="24" height="24" viewBox="0 0 24 24" stroke="none"><circle cx="12" cy="12" r="11" fill="#a19c98"/><path d="M7 7l10 10M17 7L7 17" stroke="#222" stroke-width="3"/></svg>
    <span style="margin-left:17px">VIE</span>
    <span class="text-center" style="margin-left:25px">2:10 SA<br>30/09/2021</span>
    <svg style="margin:0 16px 0 29px" width="38" height="38" viewBox="0 0 38 38" stroke="none"><path d="M0 2h24v20h-8l-6 7v-7H0z" fill="#fff"/><path d="M5 8h14M5 12h14M5 16h14" stroke="#333" stroke-width="1.500"/><circle cx="24" cy="26" r="11.500" fill="#333" stroke="#8c8886" stroke-width="1"/><text x="20" y="32" font-size="16" font-weight="700" fill="#fff" font-family="Open Sans">5</text></svg>
    <span style="width:1px;height:60px;background:#8c8683;margin-right:7px"></span>
  </div>
</footer>

<script>
const sales = [["Cường","17/04/2021","Bàn phím S200",96],["Bách","02/05/2021","Màn hình máy tính LG30",19],["Bách","24/05/2021","Chuột máy tính K1",44],["Trang","08/05/2021","Chuột máy tính K2",39],["Cường","18/05/2021","Bàn phím S200",56],["Tùng","08/05/2021","Bàn phím cơ C800",43],["Cường","07/03/2021","Bàn phím cơ S1000",30],["Trang","15/04/2021","Bàn phím cơ C800",17],["Trang","02/03/2021","Bàn phím S200",61],["Bách","18/04/2021","Màn hình máy tính LG30",58],["Bách","26/04/2021","Laptop Dell A60",81],["Cường","04/03/2021","Màn hình máy tính LG30",71],["Trang","15/05/2021","Laptop HP N100",89],["Bách","09/05/2021","Laptop Thinkpad D15",26],["Bách","15/05/2021","Laptop HP N100",62],["Tùng","18/05/2021","Sạc máy tính",55],["Trang","13/05/2021","Laptop Dell A60",76],["Cường","15/04/2021","Màn hình máy tính LG30",91]];
const items = ["Bàn phím cơ C800","Bàn phím cơ S1000","Bàn phím S200","Chuột máy tính K1","Chuột máy tính K2","Laptop Dell A60","Laptop HP N100","Laptop Thinkpad D15","Màn hình máy tính LG30","Sạc máy tính"];
const editor = '<div class="frame"></div><div class="celled" contenteditable="true" spellcheck="false" role="textbox" aria-label="G6">=SUMIFS(<br><span class="pill">$D$3:$D$23</span>,<br><br>$C$3:$C$23,<br>$F$6,<br><br>$A$3:$A$23,<br>$G$5,<br><br>$B$3:$B$23,<br>"&gt;="&amp;DATE(2<br>021, $G$2,1),<br><br>$B$3:$B$23"&lt;<br>=<b>"&amp;DATE(</b>20<br>21, $G$2+1,0<b>)</b>)</div>';
const tail = '<td></td><td class="gray"></td><td></td>';
let html = '<tr class="r1"><th scope="row">1</th><td class="ttl" colspan="4">Bảng dữ liệu bán hàng</td><td class="gray"></td><td></td><td></td><td></td><td></td>' + tail + '</tr>'
 + '<tr class="r2"><th scope="row">2</th><td class="hd">Nhân viên</td><td class="hd text-center">Ngày bán</td><td class="hd">Sản phẩm</td><td class="hd text-end">Số lượng</td><td class="gray"></td><td class="lab">Tháng</td><td class="inp">5</td><td></td><td></td>' + tail + '</tr>';
sales.forEach((s, i) => {
  const r = i + 3;
  let right;
  if (r === 4) right = '<td class="top"></td><td class="band" colspan="3">Nhân viên</td>';
  else if (r === 5) right = '<td class="f sub">Sản phẩm</td><td class="f sub e">Cường</td><td class="f sub e">Bách</td><td class="f sub e vr-end">Trang</td>';
  else if (r > 5 && r < 16) right = `<td class="f">${items[r - 6]}</td><td class="v${r === 6 ? ' act' : ''}">${r === 6 ? editor : ''}</td><td class="v"></td><td class="v vr-end"></td>`;
  else right = '<td></td><td></td><td></td><td></td>';
  html += `<tr class="${r === 6 ? 'now' : ''}"><th scope="row">${r}</th><td class="ln">${s[0]}</td><td class="ln dt">${s[1]}</td><td class="ln">${s[2]}</td><td class="ln num">${s[3]}${r === 3 ? '<div class="range"></div>' : ''}</td><td class="gray"></td>${right}${tail}</tr>`;
});
document.getElementById('cells').innerHTML = html;
</script>
</body>
</html>
